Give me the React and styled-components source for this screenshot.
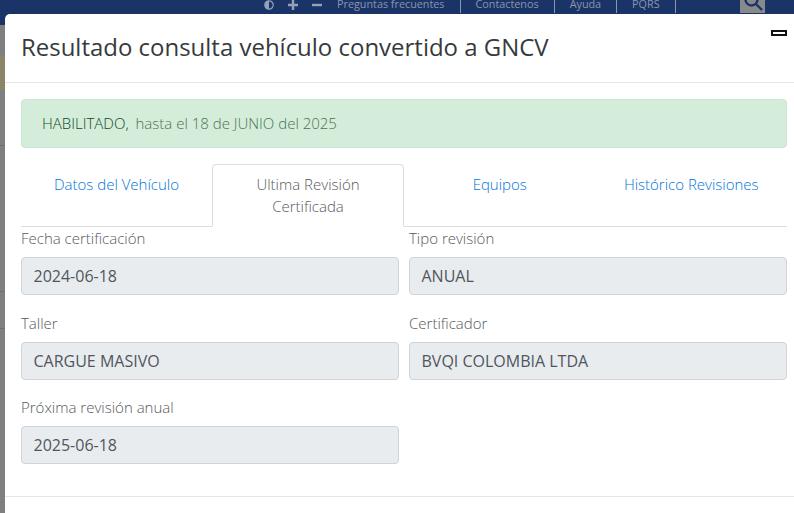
import React from 'react'
import styled, { createGlobalStyle } from 'styled-components'

const Global = createGlobalStyle`
  html, body { margin: 0; padding: 0; height: 100%; overflow: hidden; }
  body { font-family: "Open Sans", sans-serif; background: #7d7d7d; }
  * { box-sizing: border-box; }
`

const Page = styled.div`
  width: 794px;
  height: 513px;
  overflow: hidden;
  position: relative;
  background: linear-gradient(
    to bottom,
    #7f7f7f 0 55px,
    #8a8468 55px 90px,
    #7f7f7f 90px 145px,
    #6f6f6f 145px 146px,
    #7f7f7f 146px 291px,
    #6f6f6f 291px 292px,
    #7f7f7f 292px 328px,
    #6f6f6f 328px 329px,
    #7f7f7f 329px
  );
`

const TopBar = styled.div`
  height: 25px;
  background: #1b3468;
  display: flex;
  align-items: flex-start;
  overflow: hidden;
  padding-left: 264px;
  color: #8a95ae;
  font-size: 10.8px;
  font-weight: 400;
`

const BarIcons = styled.div`
  display: flex;
  align-items: center;
  gap: 14px;
  margin-right: 15px;
  height: 9px;
`

const BarLink = styled.span`
  padding-right: 15px;
  margin-right: 15px;
  border-right: 1px solid #8a95ae;
  line-height: 11px;
  margin-top: -2px;
  height: 15px;
  white-space: nowrap;
`

const SearchBox = styled.div`
  position: absolute;
  top: 0;
  left: 740px;
  width: 25px;
  height: 13px;
  background: #87898c;
  overflow: hidden;
  display: flex;
  justify-content: center;
  color: #1b3468;
`

const Modal = styled.div`
  position: absolute;
  left: 5px;
  top: 14px;
  width: 789px;
  height: 499px;
  background: #fff;
  border-radius: 5px 0 0 0;
  display: flex;
  flex-direction: column;
`

const Header = styled.div`
  height: 69px;
  flex: none;
  padding: 16px 16px 0;
  border-bottom: 1px solid #e5e5e5;
  position: relative;
`

const Title = styled.h4`
  margin: 0;
  font-size: 23.97px;
  line-height: 33px;
  font-weight: 400;
  color: #373a3c;
  white-space: nowrap;
`

const CloseBar = styled.div`
  position: absolute;
  right: 7px;
  top: 16px;
  width: 16px;
  height: 6px;
  background: #fff;
  border: 2px solid #111;
`

const Body = styled.div`
  padding: 16px 7px 0 16px;
  height: 413px;
  flex: none;
`

const Alert = styled.div`
  height: 49px;
  background: #d4edda;
  border: 1px solid #c9e7d1;
  border-radius: 4px;
  padding: 0 20px 2px;
  display: flex;
  align-items: center;
  font-size: 15px;
  font-weight: 300;
  color: #4a7355;
  white-space: pre;
`

const Strong = styled.span`
  font-weight: 300;
  color: #0f4a1e;
  margin-right: 3px;
`

const Tabs = styled.div`
  margin-top: 16px;
  display: grid;
  grid-template-columns: 191px 192px 1fr 1fr;
  height: 63px;
  border-bottom: 1px solid #ddd;
`

const Tab = styled.div`
  padding: 8px 16px;
  height: 63px;
  text-align: center;
  font-size: 15px;
  font-weight: 300;
  line-height: 22px;
  color: ${p => (p.$active ? '#55595c' : '#0275d8')};
  background: ${p => (p.$active ? '#fff' : 'transparent')};
  border: 1px solid ${p => (p.$active ? '#ddd' : 'transparent')};
  border-bottom-color: ${p => (p.$active ? '#fff' : 'transparent')};
  border-radius: 4px 4px 0 0;
`

const Form = styled.div`
  display: grid;
  grid-template-columns: 1fr 1fr;
  column-gap: 10px;
`

const Field = styled.div`
  height: 84.5px;
`

const Label = styled.div`
  font-size: 15px;
  font-weight: 300;
  line-height: 23px;
  color: #55595c;
  height: 30px;
`

const Value = styled.div`
  height: 38px;
  background: #e9ecef;
  border: 1px solid #ced4da;
  border-radius: 4px;
  padding: 0 12px 0 11.5px;
  display: flex;
  align-items: center;
  font-size: 16px;
  font-weight: 400;
  color: #50565c;
`

const Footer = styled.div`
  border-top: 1px solid #e5e5e5;
  flex: 1;
`

const Search = () => (
  <svg width="20" height="20" viewBox="0 0 20 20" fill="none" stroke="currentColor" strokeWidth="2.4" style={{ marginTop: -9 }}>
    <circle cx="8.5" cy="8.5" r="6" />
    <path d="M13 13l6 6" />
  </svg>
)

const Contrast = () => (
  <svg width="10" height="10" viewBox="0 0 10 10">
    <circle cx="5" cy="5" r="4.2" fill="none" stroke="#97a1b6" strokeWidth="1.2" />
    <path d="M5 .8a4.2 4.2 0 0 0 0 8.4z" fill="#97a1b6" />
  </svg>
)

const Plus = () => (
  <svg width="10" height="10" viewBox="0 0 10 10" stroke="#97a1b6" strokeWidth="2.4">
    <path d="M0 5h10M5 0v10" />
  </svg>
)

const Minus = () => (
  <svg width="10" height="10" viewBox="0 0 10 10" stroke="#97a1b6" strokeWidth="2.4">
    <path d="M0 5h10" />
  </svg>
)

const fields = [
  ['Fecha certificación', '2024-06-18'],
  ['Tipo revisión', 'ANUAL'],
  ['Taller', 'CARGUE MASIVO'],
  ['Certificador', 'BVQI COLOMBIA LTDA'],
  ['Próxima revisión anual', '2025-06-18'],
]

export default function App() {
  return (
    <Page>
      <Global />
      <TopBar>
        <BarIcons>
          <Contrast />
          <Plus />
          <Minus />
        </BarIcons>
        <BarLink>Preguntas frecuentes</BarLink>
        <BarLink>Contactenos</BarLink>
        <BarLink>Ayuda</BarLink>
        <BarLink>PQRS</BarLink>
      </TopBar>
      <SearchBox><Search /></SearchBox>
      <Modal>
        <Header>
          <Title>Resultado consulta vehículo convertido a GNCV</Title>
          <CloseBar />
        </Header>
        <Body>
          <Alert><Strong>HABILITADO,</Strong> hasta el 18 de JUNIO del 2025</Alert>
          <Tabs>
            <Tab>Datos del Vehículo</Tab>
            <Tab $active>Ultima Revisión Certificada</Tab>
            <Tab>Equipos</Tab>
            <Tab>Histórico Revisiones</Tab>
          </Tabs>
          <Form>
            {fields.map(([label, value]) => (
              <Field key={label}>
                <Label>{label}</Label>
                <Value>{value}</Value>
              </Field>
            ))}
          </Form>
        </Body>
        <Footer />
      </Modal>
    </Page>
  )
}
